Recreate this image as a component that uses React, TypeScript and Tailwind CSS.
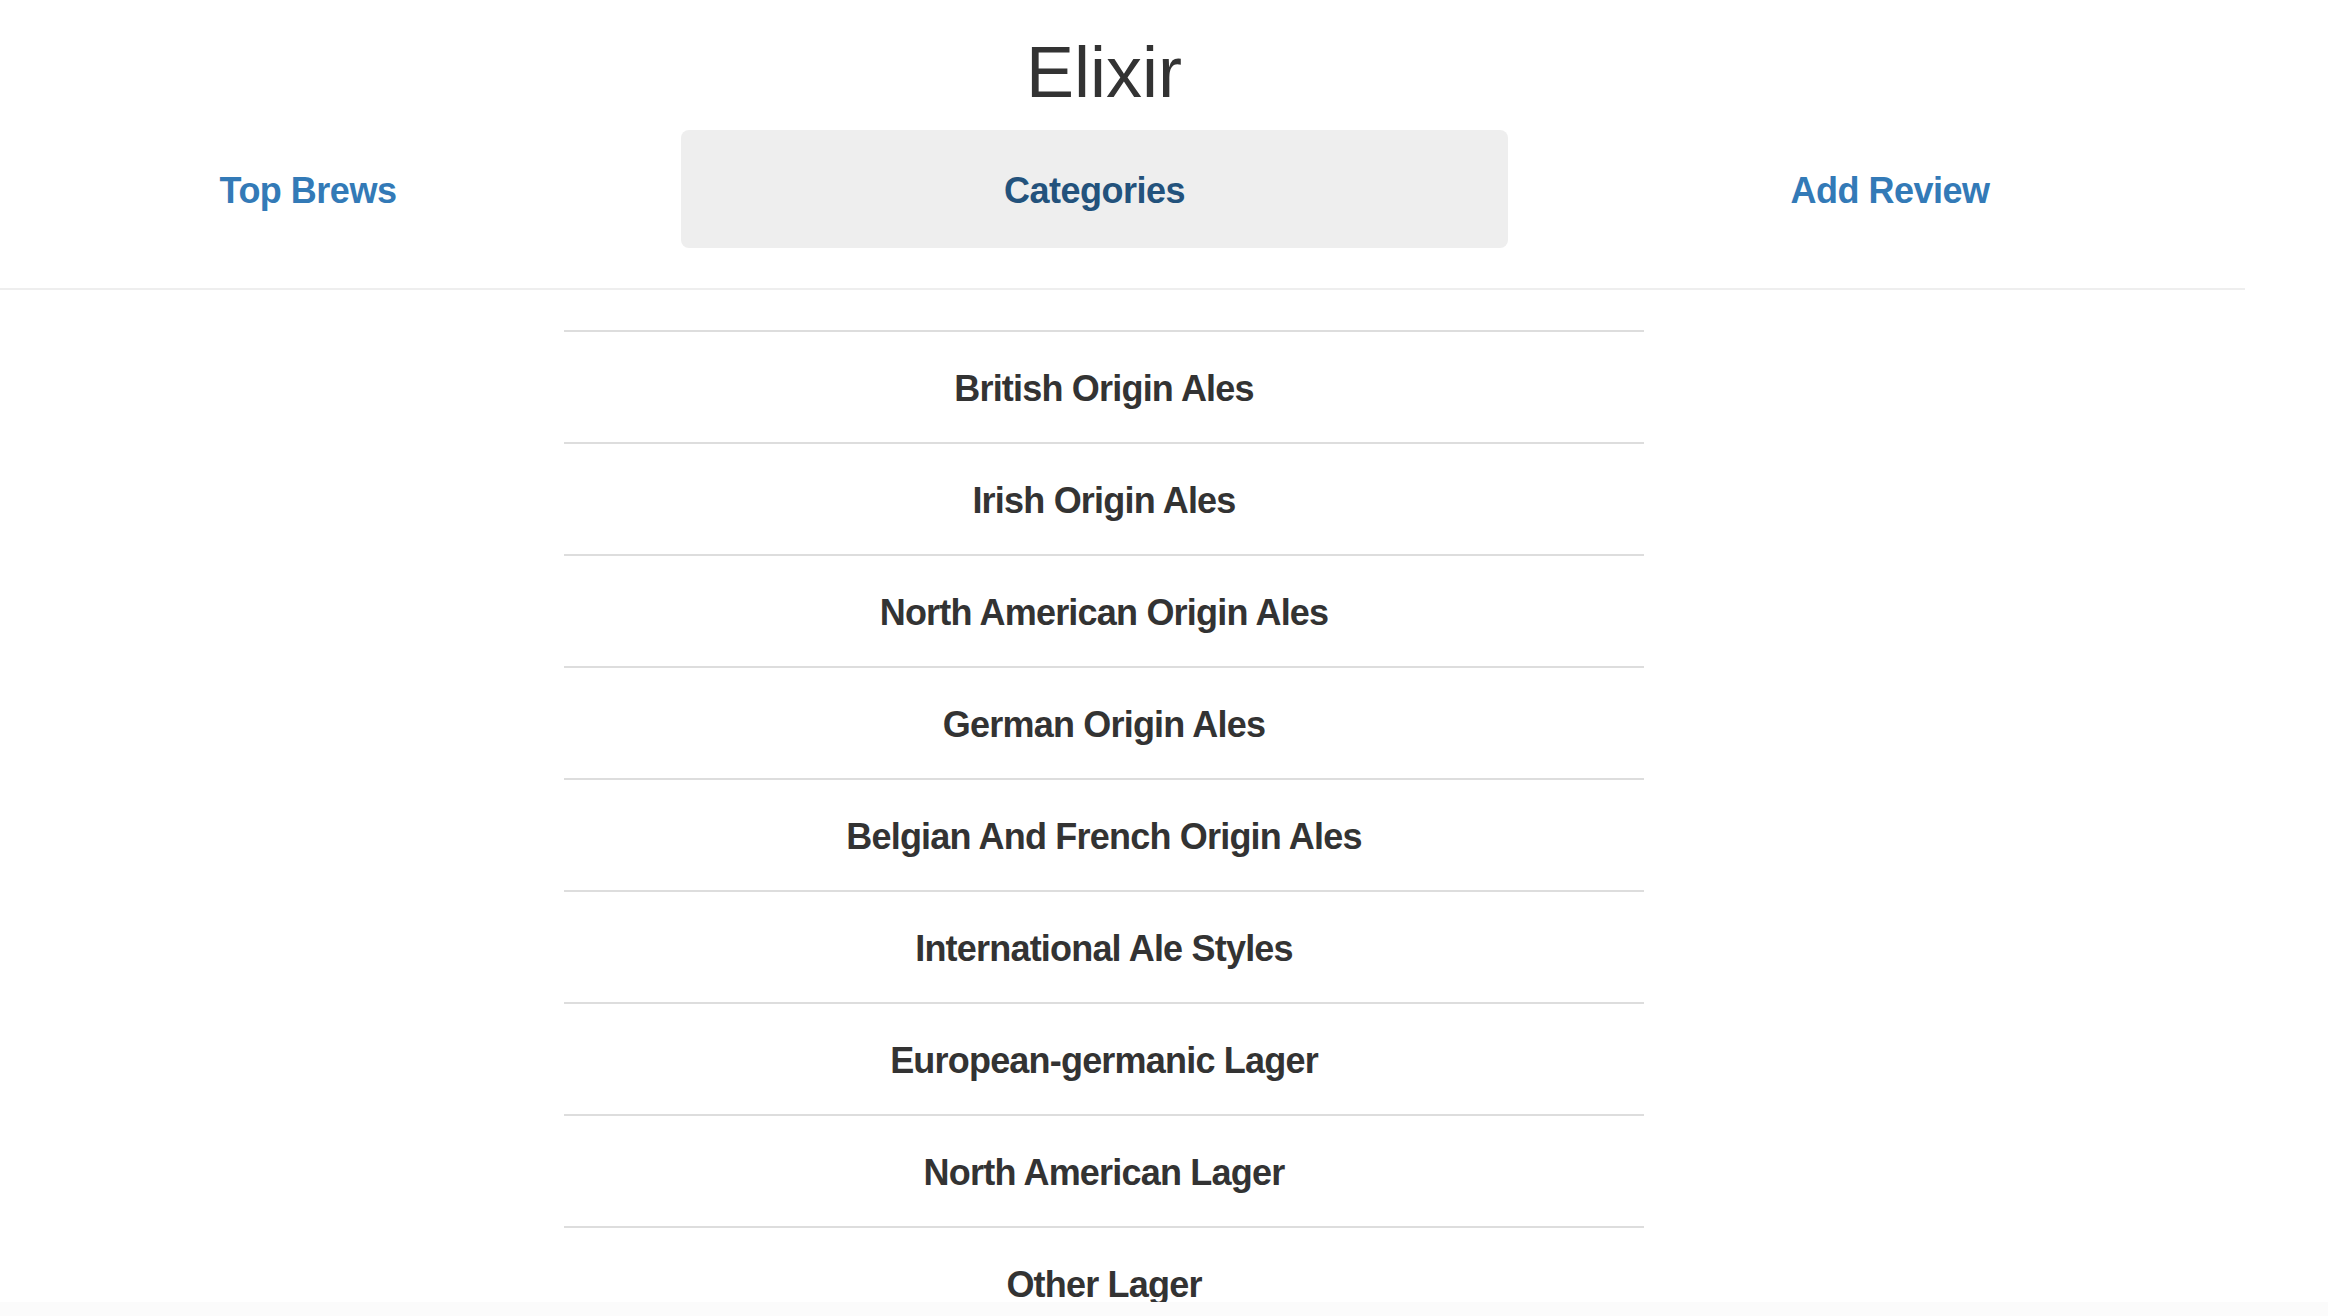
import React from 'react';

const categories = [
  'British Origin Ales',
  'Irish Origin Ales',
  'North American Origin Ales',
  'German Origin Ales',
  'Belgian And French Origin Ales',
  'International Ale Styles',
  'European-germanic Lager',
  'North American Lager',
  'Other Lager',
];

function NavItem({ label, active, width }: { label: string; active?: boolean; width: string }) {
  return (
    <a
      href="#"
      className={
        active
          ? `${width} flex items-center justify-center rounded-[8px] bg-[#eee] pt-[3px] text-[#23527c]`
          : `${width} flex items-center justify-center pt-[3px] text-[#337ab7]`
      }
    >
      <span className="text-[36px] font-bold leading-[40px] tracking-[-0.5px]">{label}</span>
    </a>
  );
}

export default function App() {
  return (
    <div className="min-h-screen bg-white font-['Liberation_Sans',Arial,sans-serif] text-[#333]">
      <header className="w-[2245px] border-b-2 border-[#eee] pb-[40px]">
        <h1 className="w-[2208px] pt-[33px] text-center text-[72px] font-normal leading-[79px]">Elixir</h1>
        <nav className="mt-[18px] flex h-[118px] gap-[65px]">
          <NavItem label="Top Brews" width="w-[616px]" />
          <NavItem label="Categories" width="w-[827px]" active />
          <NavItem label="Add Review" width="w-[634px]" />
        </nav>
      </header>

      <ul className="ml-[564px] mt-[40px] w-[1080px]">
        {categories.map((c) => (
          <li
            key={c}
            className="flex h-[112px] items-center justify-center border-t-2 border-[#ddd] pt-[3px] text-[36px] font-bold leading-[40px] tracking-[-0.8px]"
          >
            {c}
          </li>
        ))}
      </ul>

      <div className="fixed bottom-0 left-0 h-[14px] w-full bg-[#fbfbfb]" />
    </div>
  );
}
